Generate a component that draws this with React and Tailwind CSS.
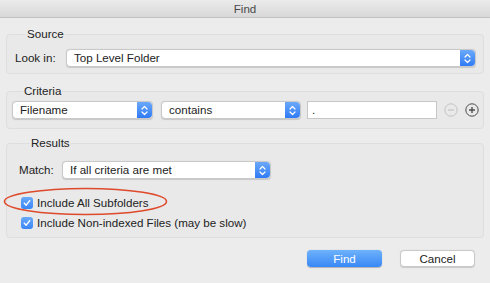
import React from 'react';

const font = { fontFamily: '"Liberation Sans", Arial, sans-serif' };

function Stepper() {
  return (
    <div className="flex w-[15px] items-center justify-center self-stretch rounded-r-[4px] bg-gradient-to-b from-[#6aa8fa] to-[#2f7bf5]">
      <svg width="7" height="11" viewBox="0 0 7 11" fill="none" stroke="white" strokeWidth="1.2" strokeLinecap="round" strokeLinejoin="round">
        <path d="M1 4 L3.5 1.5 L6 4" />
        <path d="M1 7 L3.5 9.5 L6 7" />
      </svg>
    </div>
  );
}

function Popup({ label, className }) {
  return (
    <div className={`flex h-[18px] items-stretch rounded-[4px] border border-[#c9c9c9] bg-white shadow-[0_0.5px_1px_rgba(0,0,0,0.15)] ${className}`}>
      <div className="flex flex-1 items-center pl-[7px] text-[11.6px] text-[#222]">{label}</div>
      <Stepper />
    </div>
  );
}

function Checkbox({ label }) {
  return (
    <div className="flex h-[12px] items-center gap-[4px]">
      <div className="flex h-[12px] w-[12px] items-center justify-center rounded-[3px] bg-gradient-to-b from-[#69a8f9] to-[#3a85f6]">
        <svg width="8" height="8" viewBox="0 0 8 8" fill="none" stroke="white" strokeWidth="1.4" strokeLinecap="round" strokeLinejoin="round">
          <path d="M1.3 4.3 L3.2 6.2 L6.7 1.6" />
        </svg>
      </div>
      <span className="text-[11.6px] text-[#222]">{label}</span>
    </div>
  );
}

function Group({ title, className, children }) {
  return (
    <fieldset className={`mx-[6px] rounded-[4px] border border-[#dedede] bg-[#e9e9e9] ${className}`}>
      <legend className="ml-[11px] px-[1px] text-[11.6px] leading-[14px] text-[#222]">{title}</legend>
      {children}
    </fieldset>
  );
}

export default function App() {
  return (
    <div className="relative flex h-[283px] w-[490px] flex-col overflow-hidden bg-[#ececec]" style={font}>
      <div className="flex h-[18px] items-center justify-center border-b border-[#c2c2c2] bg-gradient-to-b from-[#ebebeb] to-[#d8d8d8] text-[11.6px] text-[#4a4a4a]">
        Find
      </div>

      <Group title="Source" className="mt-[9px] h-[47px] pl-[8px] pr-[7px] pt-[8px]">
        <div className="flex items-center">
          <span className="w-[51px] text-[11.6px] text-[#222]">Look in:</span>
          <Popup label="Top Level Folder" className="flex-1" />
        </div>
      </Group>

      <Group title="Criteria" className="mt-[10px] h-[45px] pl-[5px] pt-[3px]">
        <div className="flex items-center">
          <Popup label="Filename" className="w-[141px]" />
          <Popup label="contains" className="ml-[8px] w-[140px]" />
          <div className="ml-[6px] flex h-[18px] w-[130px] items-center border border-[#c6c6c6] bg-white pl-[4px] text-[11.6px] text-[#222]">
            .
          </div>
          <svg className="ml-[7px]" width="14" height="14" viewBox="0 0 14 14" fill="none" stroke="#c3c3c3" strokeWidth="1">
            <circle cx="7" cy="7" r="6.2" />
            <path d="M4 7 H10" strokeWidth="1.2" />
          </svg>
          <svg className="ml-[7px]" width="14" height="14" viewBox="0 0 14 14" fill="none" stroke="#4d4d4d" strokeWidth="1">
            <circle cx="7" cy="7" r="6.2" />
            <path d="M4 7 H10 M7 4 V10" strokeWidth="1.4" />
          </svg>
        </div>
      </Group>

      <Group title="Results" className="mt-[7px] h-[102px] pl-[12px] pt-[11px]">
        <div className="flex items-center">
          <span className="w-[43px] text-[11.6px] text-[#222]">Match:</span>
          <Popup label="If all criteria are met" className="w-[209px]" />
        </div>
        <div className="mt-[18px] flex flex-col gap-[8px] pl-[2px]">
          <Checkbox label="Include All Subfolders" />
          <Checkbox label="Include Non-indexed Files (may be slow)" />
        </div>
      </Group>

      <div className="mt-[12px] flex justify-end gap-[18px] pr-[15px]">
        <div className="flex h-[17px] w-[75px] items-center justify-center rounded-[4px] bg-gradient-to-b from-[#6db2fb] to-[#3887f6] text-[11.6px] text-white shadow-[0_0.5px_1px_rgba(0,0,0,0.25)]">
          Find
        </div>
        <div className="flex h-[17px] w-[75px] items-center justify-center rounded-[4px] border border-[#c9c9c9] bg-white text-[11.6px] text-[#222] shadow-[0_0.5px_1px_rgba(0,0,0,0.15)]">
          Cancel
        </div>
      </div>

      <svg className="pointer-events-none absolute left-0 top-0" width="490" height="283">
        <ellipse cx="85.5" cy="201.5" rx="81" ry="13" fill="none" stroke="#de4a2c" strokeWidth="1.6" />
      </svg>
    </div>
  );
}
